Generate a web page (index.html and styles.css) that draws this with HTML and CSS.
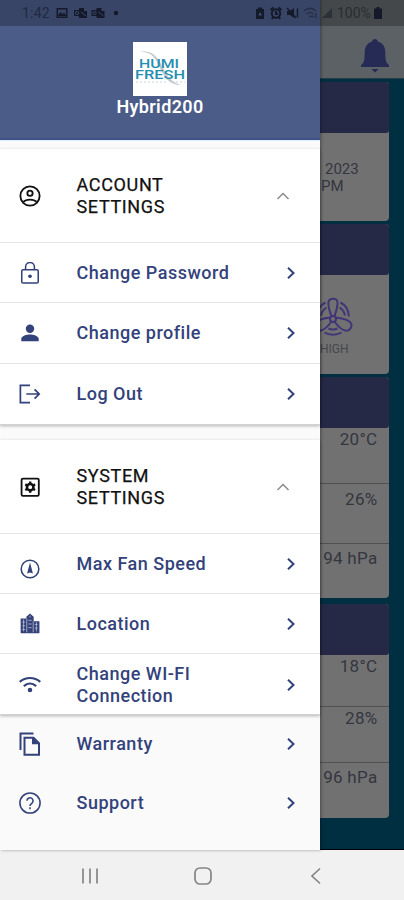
FILE: index.html
```
<!DOCTYPE html>
<html lang="en">
<head>
<meta charset="utf-8">
<meta name="viewport" content="width=device-width, initial-scale=1">
<title>Hybrid200</title>
<link rel="stylesheet" href="styles.css">
</head>
<body>
<div class="phone">
  <div class="screen">
    <aside class="drawer">
      <header class="drawer-head">
        <svg class="logo" viewBox="0 0 54 54">
          <rect width="54" height="54" fill="#fff"/>
          <path d="M8 10c8-2 15 2 20 12s9 18 20 21c-12 0-17-8-22-19S17 10 8 10z" fill="#c3c9cd"/>
          <text x="6" y="25.500" textLength="40" lengthAdjust="spacingAndGlyphs" class="logo-text">HUMI</text>
          <text x="2" y="36.800" textLength="50" lengthAdjust="spacingAndGlyphs" class="logo-text">FRESH</text>
          <path d="M3 40h31M43 40h9" stroke="#c8d4da" stroke-width="1" stroke-dasharray="2 2"/>
        </svg>
        <h1>Hybrid200</h1>
      </header>
      <div class="gap top"></div>
      <section class="group">
        <div class="row title acc">
          <svg class="ic" viewBox="0 0 24 24"><g fill="none" stroke="currentColor" stroke-width="2"><circle cx="12" cy="12" r="10.500"/><circle cx="12" cy="9" r="2.900"/><path d="M4.800 18.500c3-3.300 11.400-3.300 14.400 0"/></g></svg>
          <span>ACCOUNT<br>SETTINGS</span>
          <svg class="up" viewBox="0 0 14 14"><path d="M1.500 10 7 4.500l5.500 5.500"/></svg>
        </div>
        <div class="row r60">
          <svg class="ic" viewBox="0 0 24 24"><g fill="none" stroke="currentColor" stroke-width="1.700"><rect x="3" y="8.500" width="18" height="14.500" rx="1.500"/><path d="M7.200 8.500V5.300a4.800 4.800 0 0 1 9.600 0v3.200"/></g><circle cx="12" cy="15.500" r="2" fill="currentColor"/></svg>
          <span>Change Password</span>
          <svg class="go" viewBox="0 0 14 14"><path d="M4 1.800 9.500 7 4 12.200"/></svg>
        </div>
        <div class="row r61">
          <svg class="ic" viewBox="0 0 24 24"><path fill="currentColor" d="M12 12a4.600 4.600 0 1 0 0-9.200 4.600 4.600 0 0 0 0 9.200zm0 1.600c-3.300 0-9.500 1.500-9.500 4.700V21h19v-2.700c0-3.200-6.200-4.700-9.500-4.700z"/></svg>
          <span>Change profile</span>
          <svg class="go" viewBox="0 0 14 14"><path d="M4 1.800 9.500 7 4 12.200"/></svg>
        </div>
        <div class="row r61 last">
          <svg class="ic" viewBox="0 0 24 24"><path fill="none" stroke="currentColor" stroke-width="1.900" d="M12 2.500H1.500v19H12M8 12h14M17 7l5 5-5 5"/></svg>
          <span>Log Out</span>
          <svg class="go" viewBox="0 0 14 14"><path d="M4 1.800 9.500 7 4 12.200"/></svg>
        </div>
      </section>
      <div class="gap mid"></div>
      <section class="group">
        <div class="row title sys">
          <svg class="ic" viewBox="0 0 24 24"><rect x="2.800" y="2.800" width="18.800" height="18.800" rx="1.500" fill="none" stroke="currentColor" stroke-width="2"/><circle cx="12.200" cy="12.200" r="3.500" fill="none" stroke="currentColor" stroke-width="2.800"/><path stroke="currentColor" stroke-width="2.600" d="M12.200 6v2.400M12.200 16v2.400M6.800 9.100l2.100 1.200M15.500 14.100l2.100 1.200M6.800 15.300l2.100-1.200M15.500 10.300l2.100-1.200"/></svg>
          <span>SYSTEM<br>SETTINGS</span>
          <svg class="up" viewBox="0 0 14 14"><path d="M1.500 10 7 4.500l5.500 5.500"/></svg>
        </div>
        <div class="row r60">
          <svg class="ic low" viewBox="0 0 24 24"><circle cx="12" cy="12" r="9.600" fill="none" stroke="currentColor" stroke-width="1.700"/><path fill="currentColor" d="m12 5 3.200 12-3.200-1.200L8.800 17z"/></svg>
          <span>Max Fan Speed</span>
          <svg class="go" viewBox="0 0 14 14"><path d="M4 1.800 9.500 7 4 12.200"/></svg>
        </div>
        <div class="row r60">
          <svg class="ic" viewBox="0 0 24 24"><path fill="currentColor" d="M1.800 6H8V4l4-3.500L16 4v5h6.300v13H1.800z"/><path stroke="#fff" stroke-width=".9" d="M8.500 6v15M15.500 9v12M3.500 10h3.200M3.500 14h3.200M3.500 18h3.200M10.300 8h3.500M10.300 12h3.500M10.300 16h3.500M17.200 12.500h3M17.200 16.500h3M12 3v2M5 7v13M19 10v10" opacity=".65"/></svg>
          <span>Location</span>
          <svg class="go" viewBox="0 0 14 14"><path d="M4 1.800 9.500 7 4 12.200"/></svg>
        </div>
        <div class="row r61 wifi last">
          <svg class="ic" viewBox="0 0 24 24"><path fill="none" stroke="currentColor" stroke-width="2.400" d="M.8 8.500c6.500-5.500 15.900-5.500 22.400 0M5.300 13.300c4-3.600 9.400-3.600 13.400 0"/><circle cx="12" cy="17.500" r="2.500" fill="currentColor"/></svg>
          <span>Change WI-FI<br>Connection</span>
          <svg class="go" viewBox="0 0 14 14"><path d="M4 1.800 9.500 7 4 12.200"/></svg>
        </div>
      </section>
      <section class="extra">
        <div class="row r58">
          <svg class="ic tall" viewBox="0 0 22 24"><path fill="none" stroke="currentColor" stroke-width="2" d="M14.500 1.500H1.500V18M5.500 5.700h9L20 11.200v11.600H5.500z"/><path fill="currentColor" d="M13 5.700h1.800l5.200 5.300v1.300h-7z"/></svg>
          <span>Warranty</span>
          <svg class="go" viewBox="0 0 14 14"><path d="M4 1.800 9.500 7 4 12.200"/></svg>
        </div>
        <div class="row r60">
          <svg class="ic" viewBox="0 0 24 24"><g fill="none" stroke="currentColor" stroke-width="1.700"><circle cx="12" cy="12" r="11"/><path d="M8.700 9.600a3.300 3.300 0 1 1 5.200 2.700c-1.300.9-1.900 1.400-1.900 2.900M12 16.700v2"/></g></svg>
          <span>Support</span>
          <svg class="go" viewBox="0 0 14 14"><path d="M4 1.800 9.500 7 4 12.200"/></svg>
        </div>
      </section>
    </aside>
    <main class="page">
      <div class="page-head">
        <svg class="bell" viewBox="0 0 30 36"><path fill="currentColor" d="M15 1c1.600 0 2.700 1 2.800 2.600C23 5 25.300 9.300 25.300 14.500c0 7.500.6 10.500 3.700 12.500v2H1v-2c3.100-2 3.700-5 3.700-12.500C4.700 9.300 7 5 12.200 3.600 12.300 2 13.400 1 15 1zM11.500 31h7L15 34.500z"/></svg>
      </div>
      <div class="cards">
        <article class="card c1">
          <div class="bar"></div>
          <div class="date"><p>2023</p><p>PM</p></div>
        </article>
        <article class="card c2">
          <div class="bar"></div>
          <div class="fan">
            <svg viewBox="0 0 34 40"><g fill="none" stroke="currentColor" stroke-width="2"><circle cx="13" cy="22" r="3"/><path d="M11.500 19C9.500 14 8 9 8.500 5c.8-4.500 8.500-4.500 9 0 .3 4-1.200 9-3 14M15.500 20.500c5 .5 11 1.500 14.500 4.500 3.500 3.500 0 9.500-5 8.500-4-1-8-5.500-10.500-9M10.500 20.500C5 21-1 22.500-4 25c-3.500 3.500 0 9.500 5 8.500 4-1 8-5.500 10.500-9M20.500 5.500c5 2.500 8 7.500 8.500 14M19.500 10.500c3 2 5 5 5.500 8M5.500 5.500c-4 2-6 4.500-7.500 8M6.500 10.500C3.500 12.500 1.500 15.500 1 18.500M4.500 35.500c5 3 12 3 17 0M8.500 31.500c3 1.300 6 1.300 9 0"/></g></svg>
            <p>HIGH</p>
          </div>
        </article>
        <article class="card c3">
          <div class="bar"></div>
          <p class="value v1">20°C</p>
          <p class="value v2">26%</p>
          <p class="value v3">94 hPa</p>
        </article>
        <article class="card c4">
          <div class="bar"></div>
          <p class="value v1">18°C</p>
          <p class="value v2">28%</p>
          <p class="value v3">96 hPa</p>
        </article>
      </div>
    </main>
  </div>
  <nav class="nav">
    <svg viewBox="0 0 20 20"><path d="M3 2.500v15M10 2.500v15M17 2.500v15"/></svg>
    <svg viewBox="0 0 20 20"><rect x="2" y="2" width="16" height="16" rx="5"/></svg>
    <svg viewBox="0 0 20 20"><path d="m14 2.500-8 7.500 8 7.500"/></svg>
  </nav>
  <div class="status">
    <span class="clock">1:42</span>
    <svg class="notes" viewBox="0 0 66 14">
      <path fill="currentColor" fill-rule="evenodd" d="M1.500 2h11v10h-11zM3 3.500v7h8v-7z"/><path fill="currentColor" d="m2.500 10 3-4 2 2L9 6.500l2.500 3.500z"/>
      <g id="mail"><path fill="currentColor" d="M24 2h5v3h3v7h-8v-2h-5V4h5z"/><circle cx="22" cy="7" r="1.600" fill="none" stroke="#384769"/><path stroke="#384769" d="m26 6 5 4"/></g>
      <use href="#mail" x="17.500"/>
      <circle cx="61" cy="7" r="2.200" fill="currentColor"/>
    </svg>
    <svg class="signals" viewBox="0 0 78 14">
      <path fill="currentColor" d="M3 1.500h4V3h2v10H1V3h2z"/><path d="M3.500 9.500 5 6l2 3.500z" fill="#40507a"/>
      <circle cx="21" cy="7.500" r="4.200" fill="none" stroke="currentColor" stroke-width="2"/><path stroke="currentColor" stroke-width="2" d="m15.500 4 3-2.500M26.500 4l-3-2.500M21 5v3h2M17 13l1-2M25 13l-1-2"/>
      <path fill="currentColor" d="M32 5h3l4-3v10l-4-3h-3z"/><path stroke="currentColor" stroke-width="1.400" d="m32 2 9 10M42.500 2.500v9"/>
      <g opacity=".5"><path fill="none" stroke="currentColor" stroke-width="1.500" d="M49 5c4-3.500 8-3.500 12 0M51.500 8c2.500-2 4.500-2 7 0M54 10.500h5M61 7v5"/><path fill="currentColor" d="M67 12h10V2z"/></g>
    </svg>
    <span class="pct">100%</span>
    <svg class="batt" viewBox="0 0 8 12"><path fill="currentColor" d="M2.500 0h3v1.500H8V12H0V1.500h2.500z"/></svg>
  </div>
</div>
</body>
</html>
```
FILE: styles.css
```
* { box-sizing: border-box; }
body { margin: 0; font-family: Roboto, "Liberation Sans", sans-serif; }
h1, p { margin: 0; }
svg { display: block; flex: none; }

.phone { position: relative; width: 404px; height: 900px; display: flex; flex-direction: column; overflow: hidden; }
.screen { display: flex; height: 850px; }

.drawer { width: 320px; background: #fafafb; z-index: 1; box-shadow: 1px 0 3px rgba(0, 0, 0, .35); }
.drawer-head { height: 140px; padding-top: 42px; background: #4b5c88; border-bottom: 2px solid #41518a; display: flex; flex-direction: column; align-items: center; }
.logo { width: 54px; height: 54px; }
.logo-text { font: 500 13px Roboto, sans-serif; fill: #258fb1; }
h1 { color: #fff; font-size: 18px; line-height: 22px; font-weight: 600; letter-spacing: .35px; }
.gap.top { height: 9px; border-top: 1px solid #dcecff; }
.gap.mid { height: 15px; }

.group { background: #fff; box-shadow: 0 1px 3px rgba(0, 0, 0, .28); }
.row { display: flex; align-items: center; padding: 0 22px 0 19px; color: #33427a; font-size: 18px; line-height: 22px; font-weight: 500; letter-spacing: .5px; border-bottom: 1px solid #e4e4e6; }
.row span { flex: 1; margin-left: 35.5px; }
.row.last { border-bottom: 1px solid #d2d2d4; }
.extra .row { border-bottom: 0; }
.row.title { color: #111; font-weight: 400; letter-spacing: .65px; -webkit-text-stroke: .25px #111; padding-right: 30px; }
.acc, .sys { height: 94px; }
.r58 { height: 58px; }
.r60 { height: 60px; }
.r61 { height: 61px; }
.wifi { padding-top: 1px; }
.ic { width: 22px; height: 22px; }
.ic.low { margin-top: 10px; }
.ic.tall { height: 24px; }
.up, .go { width: 14px; height: 14px; fill: none; stroke: #8b8b8d; stroke-width: 1.5px; }
.go { stroke: #33427a; stroke-width: 2px; }

.page { width: 84px; background: #002f42; color: #34363f; border-bottom: 1px solid #000; }
.page-head { height: 79px; padding: 38px 0 0 40px; background: #5b6164; color: #252b54; border-bottom: 1px solid #223d49; }
.bell { width: 30px; height: 36px; }
.cards { display: flex; flex-direction: column; padding-top: 3px; }
.card { width: 69px; background: #717172; border-radius: 0 4px 4px 0; overflow: hidden; }
.bar { height: 51px; background: #262946; border-radius: 0 3px 3px 0; }
.c1 { height: 139px; margin-bottom: 3px; }
.c2 { height: 150px; margin-bottom: 3px; }
.c3 { height: 221px; margin-bottom: 6px; }
.c4 { height: 214px; }
.date { padding: 28px 0 0 1px; font-size: 15px; line-height: 17px; white-space: nowrap; }
.date p:first-child { margin-left: 4px; }
.fan { color: #413477; padding-top: 22px; }
.fan svg { width: 34px; height: 40px; }
.fan p { color: #46474b; font-size: 12px; line-height: 16px; margin: 4px 0 0; }
.value { font-size: 17px; line-height: 20px; text-align: right; padding: 1px 11.500px 0 0; white-space: nowrap; letter-spacing: .3px; }
.v1, .v2 { border-bottom: 1px solid #515154; }
.c3 .v1 { height: 56px; }
.c3 .v2 { height: 60px; padding-top: 5px; }
.c3 .v3 { padding-top: 4px; }
.c4 .v1 { height: 52px; }
.c4 .v2 { height: 56px; }
.c4 .v3 { padding-top: 4px; }

.nav { height: 50px; background: #f1f1f1; display: flex; gap: 93px; align-items: center; padding: 2px 0 0 80px; }
.nav svg { width: 20px; height: 20px; fill: none; stroke: #858587; stroke-width: 1.7px; }

/* translucent system bar over the app */
.status { position: absolute; z-index: 2; inset: 0 0 auto 0; height: 26px; display: flex; align-items: center; padding-left: 22px; background: rgba(0, 0, 0, .25); color: #141a29; }
.clock { width: 33px; font-size: 14px; letter-spacing: .2px; color: #202a43; }
.notes { width: 66px; height: 14px; }
.signals { width: 78px; height: 14px; margin-left: 134px; }
.pct { width: 36px; margin-left: 4px; font-size: 14px; color: #292c31; }
.batt { width: 8px; height: 12px; margin-left: 1px; }
```
